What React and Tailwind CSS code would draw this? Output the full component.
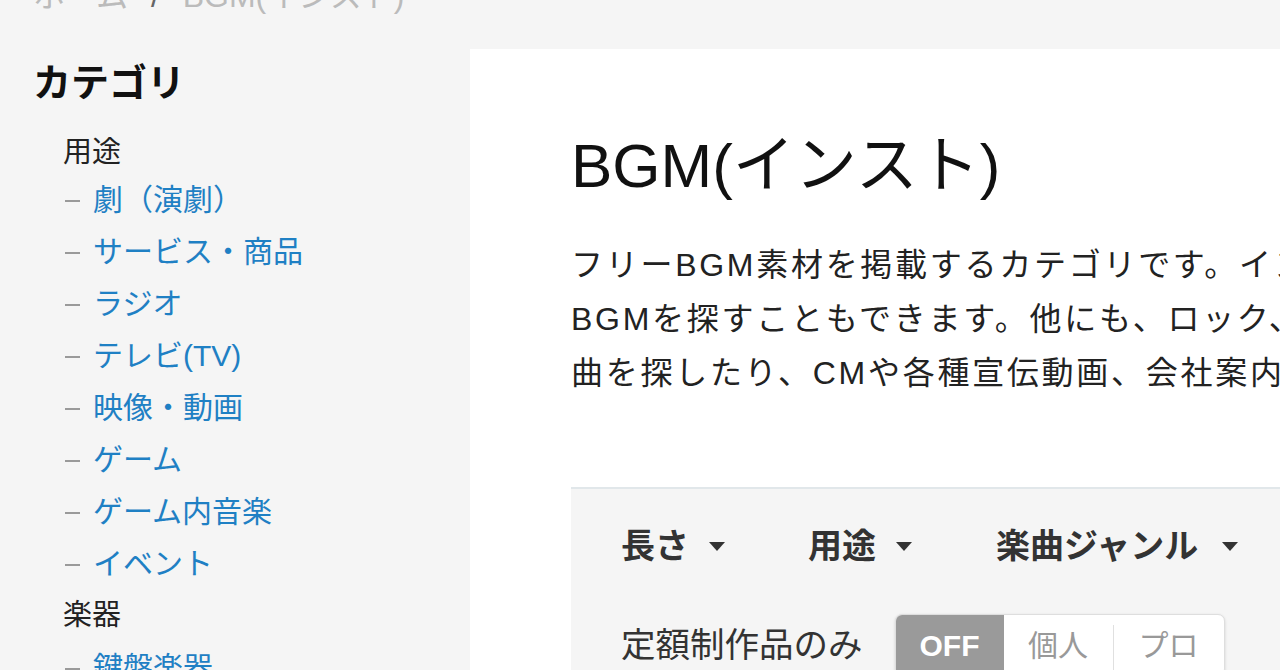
import React from "react";

const font = { fontFamily: '"Liberation Sans", "Noto Sans CJK JP", sans-serif' };

const usage = [
  "劇（演劇）",
  "サービス・商品",
  "ラジオ",
  "テレビ(TV)",
  "映像・動画",
  "ゲーム",
  "ゲーム内音楽",
  "イベント",
];

const instruments = ["鍵盤楽器", "弦楽器", "管楽器"];

function Caret() {
  return (
    <span className="ml-[20px] inline-block h-0 w-0 border-x-[8px] border-t-[9px] border-x-transparent border-t-[#333]" />
  );
}

function LinkRow({ label }) {
  return (
    <li className="flex h-[52px] items-center">
      <span className="mt-[4px] mr-[13px] ml-[2px] inline-block h-[2px] w-[15px] bg-[#9a9a9a]" />
      <a href="#" className="text-[30px] text-[#1f80c4]">
        {label}
      </a>
    </li>
  );
}

export default function App() {
  return (
    <div className="h-[670px] w-[1280px] overflow-hidden bg-[#f5f5f5]" style={font}>
      <div className="flex h-[49px] items-start pl-[33px]">
        <p className="mt-[-19px] text-[32px] leading-[30px] whitespace-nowrap text-[#bbbbbb]">
          ホーム <span className="mx-[14px] text-[#666]">/</span> BGM(インスト)
        </p>
      </div>

      <div className="flex">
        <aside className="w-[470px] shrink-0 pt-[2px] pl-[33px]">
          <h2 className="h-[78px] pt-[10px] text-[38px] leading-[44px] font-bold text-[#111]">
            カテゴリ
          </h2>
          <div className="pl-[30px]">
            <p className="h-[44px] text-[29px] leading-[46px] text-[#222]">用途</p>
            <ul>
              {usage.map((u) => (
                <LinkRow key={u} label={u} />
              ))}
            </ul>
            <p className="flex h-[52px] items-center pt-[2px] text-[29px] text-[#222]">楽器</p>
            <ul>
              {instruments.map((u) => (
                <LinkRow key={u} label={u} />
              ))}
            </ul>
          </div>
        </aside>

        <main className="min-w-0 flex-1 bg-white pt-[80px] pl-[101px]">
          <h1 className="text-[62px] leading-[74px] whitespace-nowrap text-[#111]">BGM(インスト)</h1>
          <div className="mt-[35px] text-[32px] leading-[54px] tracking-[0.085em] whitespace-nowrap text-[#222]">
            <p>フリーBGM素材を掲載するカテゴリです。インストゥルメンタルの楽曲から</p>
            <p>BGMを探すこともできます。他にも、ロック、ポップスなどジャンルから</p>
            <p>曲を探したり、CMや各種宣伝動画、会社案内などの用途から探せます。</p>
          </div>

          <section className="mt-[87px] border-t-2 border-[#e1e7ea] bg-[#f5f5f5] pt-[37px] pb-[40px] pl-[50px]">
            <div className="flex h-[40px] items-center text-[34px] font-bold whitespace-nowrap text-[#333]">
              <button className="flex items-center">
                長さ
                <Caret />
              </button>
              <button className="ml-[83px] flex items-center">
                用途
                <Caret />
              </button>
              <button className="ml-[84px] flex items-center">
                楽曲ジャンル
                <span className="ml-[24px] inline-block h-0 w-0 border-x-[8px] border-t-[9px] border-x-transparent border-t-[#333]" />
              </button>
            </div>

            <div className="mt-[48px] flex items-start whitespace-nowrap">
              <span className="mt-[10px] text-[34.5px] leading-[42px] text-[#333]">定額制作品のみ</span>
              <div className="ml-[32px] flex h-[62px] overflow-hidden rounded-[7px] border border-[#dedede] bg-white shadow-[0_1px_3px_rgba(0,0,0,0.15)]">
                <button className="flex w-[108px] items-center justify-center bg-[#9a9a9a] text-[30px] font-bold text-white">
                  OFF
                </button>
                <button className="flex w-[109px] items-center justify-center text-[30px] text-[#999]">
                  個人
                </button>
                <span className="mt-[10px] h-[52px] w-px bg-[#e0e0e0]" />
                <button className="flex w-[110px] items-center justify-center text-[30px] text-[#999]">
                  プロ
                </button>
              </div>
            </div>
          </section>
        </main>
      </div>
    </div>
  );
}
